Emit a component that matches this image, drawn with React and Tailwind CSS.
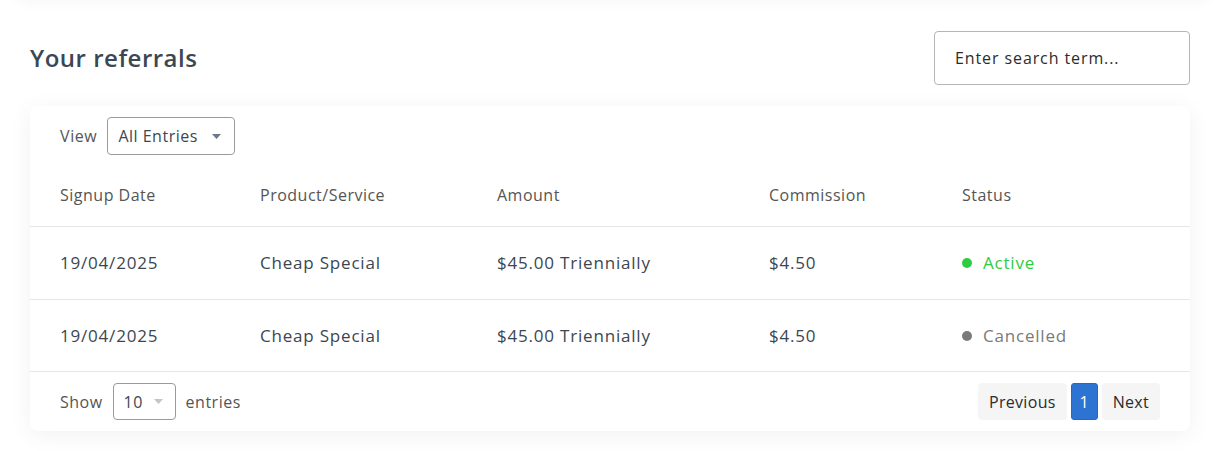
import React from "react";

const Caret = ({ className }) => (
  <svg width="9" height="5" viewBox="0 0 9 5" className={className}>
    <path d="M0 0 L9 0 L4.5 5 Z" fill="currentColor" />
  </svg>
);

const rows = [
  { date: "19/04/2025", product: "Cheap Special", amount: "$45.00 Triennially", commission: "$4.50", status: "Active" },
  { date: "19/04/2025", product: "Cheap Special", amount: "$45.00 Triennially", commission: "$4.50", status: "Cancelled" },
];

export default function App() {
  return (
    <div className="min-h-[451px] bg-white overflow-hidden" style={{ fontFamily: "'Open Sans', 'Liberation Sans', sans-serif" }}>
      <div className="mx-[10px] mt-[-20px] h-[20px] rounded-b-[30px] bg-white shadow-[0_2px_16px_rgba(0,0,0,0.04)]"></div>
      <div className="px-[30px] pr-[33px]">
        <div className="flex items-center justify-between pt-[31px]">
          <h1 className="text-[24px] font-semibold text-[#3b4853] tracking-[0.5px]">Your referrals</h1>
          <div className="w-[256px] h-[54px] border border-[#b5b5b5] rounded-[4px] flex items-center px-[20px] text-[16px] text-[#2c2c2c] tracking-[0.9px]">
            Enter search term...
          </div>
        </div>
        <div className="mt-[21px] bg-white rounded-[8px] shadow-[0_4px_24px_rgba(0,0,0,0.06)]">
          <div className="flex items-center gap-[10px] pl-[30px] pt-[11px]">
            <span className="text-[16px] text-[#555] tracking-[0.6px]">View</span>
            <div className="w-[128px] h-[38px] border border-[#9a9a9a] rounded-[4px] flex items-center justify-between pl-[10px] pr-[13px] text-[16px] text-[#3b4853] tracking-[0.5px]">
              <span>All Entries</span>
              <Caret className="text-[#6e7787]" />
            </div>
          </div>
          <div className="grid grid-cols-[200px_237px_272px_193px_1fr] pl-[30px] pt-[29px] pb-[20px] border-b border-[#e6e6e6] text-[16px] leading-[22px] text-[#555] tracking-[0.5px]">
            <div>Signup Date</div>
            <div>Product/Service</div>
            <div>Amount</div>
            <div>Commission</div>
            <div>Status</div>
          </div>
          {rows.map((r, i) => (
            <div key={i} className={`grid grid-cols-[200px_237px_272px_193px_1fr] items-center pl-[30px] ${i === 0 ? "h-[73px]" : "h-[72px]"} border-b border-[#e6e6e6] text-[17px] text-[#3c4650] tracking-[0.8px]`}>
              <div>{r.date}</div>
              <div>{r.product}</div>
              <div>{r.amount}</div>
              <div>{r.commission}</div>
              <div className="flex items-center gap-[11px]">
                <span className={`w-[10px] h-[10px] rounded-full ${r.status === "Active" ? "bg-[#2ecc40]" : "bg-[#7a7a7a]"}`}></span>
                <span className={r.status === "Active" ? "text-[#2ecc40]" : "text-[#7a7a7a]"}>{r.status}</span>
              </div>
            </div>
          ))}
          <div className="flex items-center justify-between pl-[30px] pr-[30px] h-[59px]">
            <div className="flex items-center gap-[10px] text-[16px] text-[#555] tracking-[0.5px]">
              <span>Show</span>
              <div className="w-[63px] h-[37px] border border-[#9a9a9a] rounded-[4px] flex items-center justify-between pl-[10px] pr-[12px] text-[16px] text-[#3b4853]">
                <span>10</span>
                <Caret className="text-[#c2c6cc]" />
              </div>
              <span>entries</span>
            </div>
            <div className="flex items-center gap-[4px] text-[16px] tracking-[0.3px]">
              <div className="h-[37px] px-[11px] flex items-center bg-[#f5f5f5] rounded-[4px] text-[#2c2c2c]">Previous</div>
              <div className="h-[37px] w-[27px] flex items-center justify-center bg-[#2d74d2] border border-[#2a67bb] rounded-[3px] text-white">1</div>
              <div className="h-[37px] px-[11px] flex items-center bg-[#f5f5f5] rounded-[4px] text-[#2c2c2c]">Next</div>
            </div>
          </div>
        </div>
      </div>
    </div>
  );
}
